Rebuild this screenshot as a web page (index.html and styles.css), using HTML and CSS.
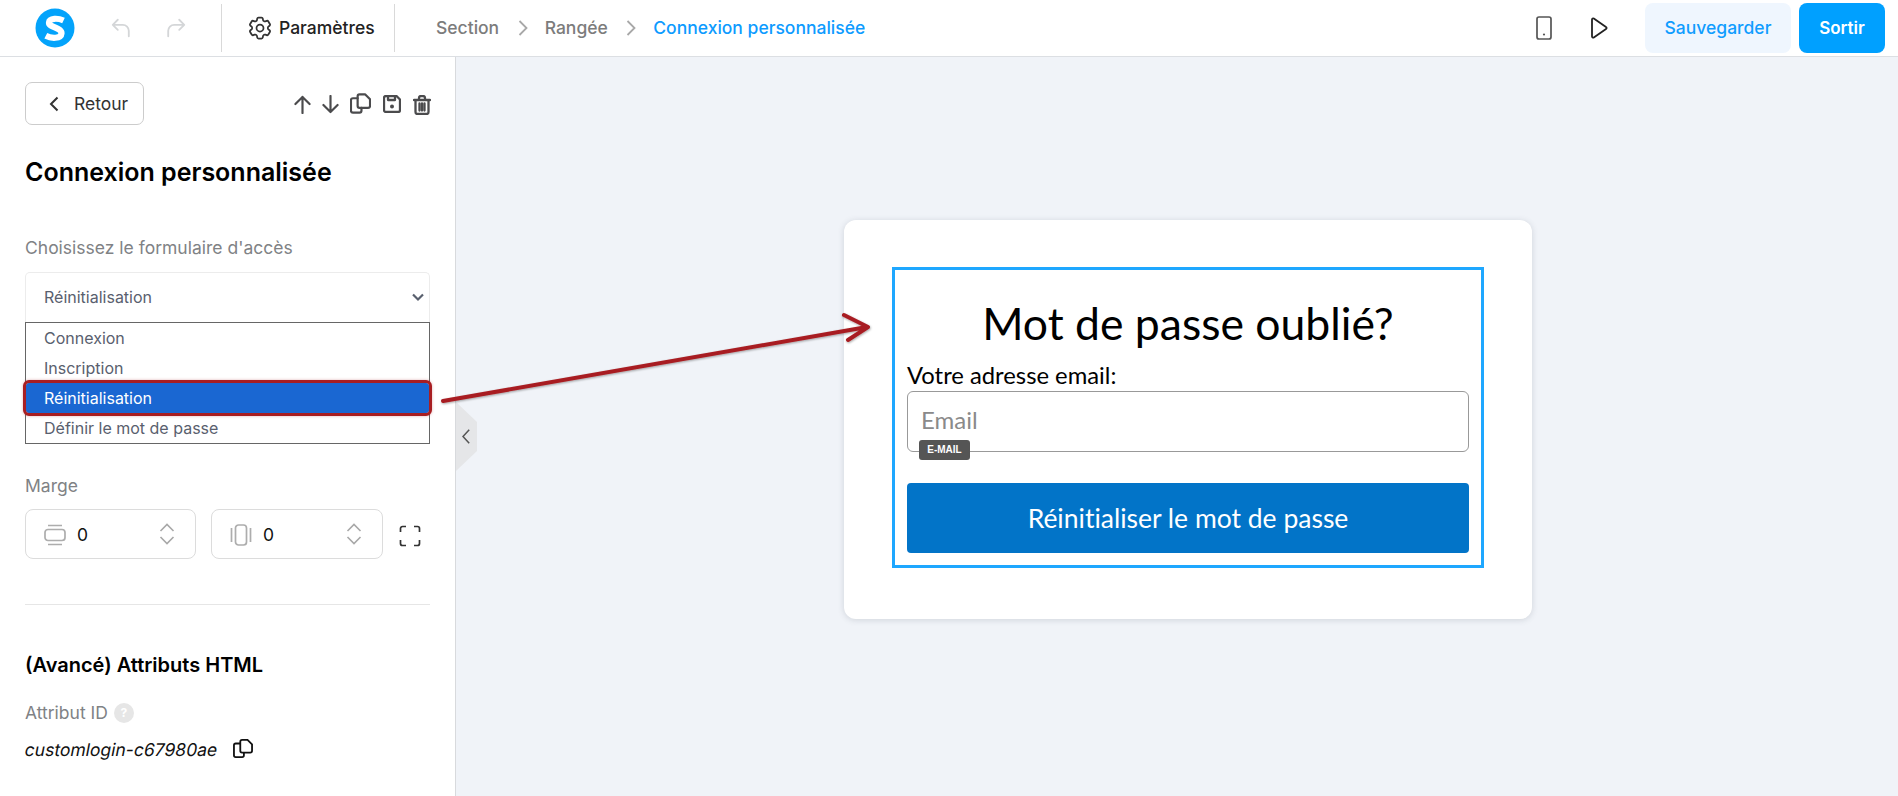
FILE: index.html
```html
<!DOCTYPE html>
<html lang="fr">
<head>
<meta charset="utf-8">
<title>Connexion personnalisée</title>
<link rel="stylesheet" href="styles.css">
</head>
<body>
<div class="app">
  <header class="topbar">
    <svg class="logo" viewBox="0 0 40 40"><circle cx="20" cy="20" r="19.5" fill="#03a3fb"/><path d="M28.5 12.5C23 10 14.5 9.800 14 14.500C13.500 19.500 27 19.500 26.500 25.500C26 31 16 30.500 10.800 27.800" fill="none" stroke="#fff" stroke-width="6.200"/></svg>
    <svg class="ico-hist first" viewBox="0 0 24 24"><path d="M8.500 3 3 8.500 8.500 14M3 8.500h11a6.500 6.500 0 0 1 6.500 6.500v6"/></svg>
    <svg class="ico-hist second" viewBox="0 0 24 24"><path d="M15.500 3 21 8.500 15.500 14M21 8.500H10A6.500 6.500 0 0 0 3.500 15v6"/></svg>
    <div class="settings">
      <svg class="gear" viewBox="0 0 24 24"><path d="M9.594 3.940c.09-.542.56-.94 1.110-.94h2.593c.55 0 1.020.398 1.110.94l.213 1.281c.063.374.313.686.645.870.074.04.147.083.22.127.325.196.72.257 1.075.124l1.217-.456a1.125 1.125 0 0 1 1.370.49l1.296 2.247a1.125 1.125 0 0 1-.26 1.431l-1.003.827c-.293.241-.438.613-.43.992a7.723 7.723 0 0 1 0 .255c-.008.378.137.75.43.991l1.004.827c.424.35.534.955.26 1.430l-1.298 2.247a1.125 1.125 0 0 1-1.369.491l-1.217-.456c-.355-.133-.75-.072-1.076.124a6.470 6.470 0 0 1-.22.128c-.331.183-.581.495-.644.869l-.213 1.281c-.09.543-.56.94-1.110.94h-2.594c-.55 0-1.019-.398-1.110-.94l-.213-1.281c-.062-.374-.312-.686-.644-.870a6.520 6.520 0 0 1-.22-.127c-.325-.196-.72-.257-1.076-.124l-1.217.456a1.125 1.125 0 0 1-1.369-.49l-1.297-2.247a1.125 1.125 0 0 1 .26-1.431l1.004-.827c.292-.24.437-.613.43-.991a6.932 6.932 0 0 1 0-.255c.007-.38-.138-.751-.43-.992l-1.004-.827a1.125 1.125 0 0 1-.26-1.430l1.297-2.247a1.125 1.125 0 0 1 1.370-.491l1.216.456c.356.133.751.072 1.076-.124.072-.044.146-.086.22-.128.332-.183.582-.495.644-.869l.214-1.280Z"/><circle cx="12" cy="12" r="3"/></svg>
      <span>Paramètres</span>
    </div>
    <nav class="crumbs">
      <span>Section</span>
      <svg class="crumb-sep" viewBox="0 0 10 16"><path d="M1.500 1 8.500 8 1.500 15"/></svg>
      <span>Rangée</span>
      <svg class="crumb-sep" viewBox="0 0 10 16"><path d="M1.500 1 8.500 8 1.500 15"/></svg>
      <span class="crumb-current">Connexion personnalisée</span>
    </nav>
    <div class="top-actions">
      <svg class="ico-phone" viewBox="0 0 16 24"><rect x="1" y="1" width="14" height="22" rx="2"/><circle class="dot" cx="8" cy="18.500" r="1.100"/></svg>
      <svg class="ico-play" viewBox="0 0 18 22"><path d="M2 2.500C2 1.500 3 1 3.800 1.500L16 10c.8.500.8 1.500 0 2L3.800 20.500C3 21 2 20.500 2 19.500Z"/></svg>
      <button class="btn-save">Sauvegarder</button>
      <button class="btn-exit">Sortir</button>
    </div>
  </header>

  <div class="workspace">
    <aside class="sidebar">
      <div class="toolbar">
        <button class="btn-back">
          <svg class="ico-back" viewBox="0 0 10 16"><path d="M8.500 1.500 2 8l6.500 6.500"/></svg>
          <span>Retour</span>
        </button>
        <div class="tools">
          <svg class="tool t-up" viewBox="0 0 18 20"><path d="M9 19V2M1.500 9.500 9 2l7.500 7.500"/></svg>
          <svg class="tool t-down" viewBox="0 0 18 20"><path d="M9 1v17M1.500 10.500 9 18l7.500-7.500"/></svg>
          <svg class="tool t-copy" viewBox="0 0 22 21"><path d="M8 5H3a2 2 0 0 0-2 2v11a2 2 0 0 0 2 2h7a2 2 0 0 0 2-2v-3"/><path d="M8 3a2 2 0 0 1 2-2h6l5 5v7a2 2 0 0 1-2 2h-9a2 2 0 0 1-2-2Z"/></svg>
          <svg class="tool t-save" viewBox="0 0 18 18"><path d="M1 3a2 2 0 0 1 2-2h10.500L17 4.500V15a2 2 0 0 1-2 2H3a2 2 0 0 1-2-2Z"/><path d="M5 1v4h7V1"/><circle class="dot" cx="9" cy="11.500" r="2"/></svg>
          <svg class="tool t-trash" viewBox="0 0 18 20"><path d="M1 5h16M6 5V3a2 2 0 0 1 2-2h2a2 2 0 0 1 2 2v2M2.500 5v12a2 2 0 0 0 2 2h9a2 2 0 0 0 2-2V5M6.500 8.500v7M9 8.500v7M11.500 8.500v7"/></svg>
        </div>
      </div>

      <h1 class="panel-title">Connexion personnalisée</h1>

      <label class="field-label form-label">Choisissez le formulaire d'accès</label>
      <div class="select">
        <span>Réinitialisation</span>
        <svg class="select-caret" viewBox="0 0 14 10"><path d="M2 2.500 7 7.500 12 2.500"/></svg>
      </div>
      <ul class="options">
        <li>Connexion</li>
        <li>Inscription</li>
        <li class="selected">Réinitialisation</li>
        <li>Définir le mot de passe</li>
      </ul>

      <label class="field-label margin-label">Marge</label>
      <div class="margin-row">
        <div class="num-field">
          <svg class="ico-side" viewBox="0 0 22 22"><path d="M4 1.500h14M4 20.500h14"/><rect x="1" y="5.500" width="20" height="11" rx="3"/></svg>
          <span class="num-value">0</span>
          <svg class="spinner" viewBox="0 0 16 22"><path d="M1.500 8 8 1.500 14.500 8M1.500 14 8 20.500 14.500 14"/></svg>
        </div>
        <div class="num-field wide">
          <svg class="ico-side" viewBox="0 0 22 22"><path d="M1.500 4v14M20.500 4v14"/><rect x="5.500" y="1" width="11" height="20" rx="3"/></svg>
          <span class="num-value">0</span>
          <svg class="spinner" viewBox="0 0 16 22"><path d="M1.500 8 8 1.500 14.500 8M1.500 14 8 20.500 14.500 14"/></svg>
        </div>
        <svg class="ico-expand" viewBox="0 0 22 22"><path d="M1.500 7V3.500a2 2 0 0 1 2-2H7M15 1.500h3.500a2 2 0 0 1 2 2V7M20.500 15v3.500a2 2 0 0 1-2 2H15M7 20.500H3.500a2 2 0 0 1-2-2V15"/></svg>
      </div>

      <hr class="divider">

      <h2 class="adv-title">(Avancé) Attributs HTML</h2>
      <div class="field-label id-label">Attribut ID <span class="help">?</span></div>
      <div class="id-row">
        <span class="id-value">customlogin-c67980ae</span>
        <svg class="ico-copy" viewBox="0 0 22 21"><path d="M8 5H3a2 2 0 0 0-2 2v11a2 2 0 0 0 2 2h7a2 2 0 0 0 2-2v-3"/><path d="M8 3a2 2 0 0 1 2-2h6l5 5v7a2 2 0 0 1-2 2h-9a2 2 0 0 1-2-2Z"/></svg>
      </div>
    </aside>

    <main class="canvas">
      <div class="card">
        <form class="login-box">
          <h3 class="login-title">Mot de passe oublié?</h3>
          <label class="login-label">Votre adresse email:</label>
          <div class="login-input">
            <span class="placeholder">Email</span>
            <span class="badge">E-MAIL</span>
          </div>
          <button type="button" class="login-submit">Réinitialiser le mot de passe</button>
        </form>
      </div>
    </main>
    <div class="collapse-tab">
      <svg viewBox="0 0 8 15"><path d="M7.200 .8 1 7.500l6.200 6.700"/></svg>
    </div>
  </div>

  <svg class="annotation" viewBox="0 0 1898 796">
    <defs><filter id="arrow-shadow" x="-5%" y="-20%" width="110%" height="140%"><feDropShadow dx="0.600" dy="1" stdDeviation="0.800" flood-color="#000" flood-opacity=".35"/></filter></defs>
    <path d="M443 401 867 327M844 315 868 327 848 340" filter="url(#arrow-shadow)"/>
  </svg>
</div>
</body>
</html>
```

FILE: styles.css
```css
* { box-sizing: border-box; }
html, body { margin: 0; height: 100%; }
body { font-family: Inter, "Liberation Sans", sans-serif; color: #222; background: #fff; overflow: hidden; }
svg { display: block; flex: none; fill: none; }
button { font-family: inherit; border: 0; cursor: pointer; }
.dot { fill: currentColor; stroke: none; }

.app { position: relative; width: 1898px; height: 796px; display: flex; flex-direction: column; }

/* Top bar */
.topbar { height: 57px; flex: none; display: flex; align-items: center; border-bottom: 1px solid #dcdfe3; padding-left: 35px; padding-bottom: 1px; }
.logo { width: 40px; height: 40px; }
.ico-hist { width: 22px; height: 22px; stroke: #d4d6d8; stroke-width: 2; stroke-linecap: round; stroke-linejoin: round; }
.ico-hist.first { margin-left: 35px; }
.ico-hist.second { margin-left: 33px; }
.settings { display: flex; align-items: center; margin-left: 34px; height: 48px; width: 174px; padding-left: 24px; border-left: 1px solid #d9d9d9; border-right: 1px solid #d9d9d9; font-size: 17.5px; font-weight: 500; color: #222; }
.gear { width: 28px; height: 28px; stroke: #333; stroke-width: 1.500; margin-right: 5px; }
.crumbs { display: flex; align-items: center; margin-left: 41px; font-size: 17.5px; font-weight: 500; color: #7c7c7c; }
.crumb-sep { width: 10px; height: 16px; margin: 0 17px 0 18.500px; stroke: #a8a8a8; stroke-width: 1.800; }
.crumb-current { color: #0d9bff; }
.top-actions { display: flex; align-items: center; margin-left: auto; padding-right: 13px; }
.ico-phone { width: 16px; height: 24px; stroke: #555; stroke-width: 1.700; color: #555; }
.ico-play { width: 18px; height: 22px; stroke: #222; stroke-width: 1.800; stroke-linejoin: round; margin-left: 38px; }
.btn-save { width: 146px; height: 50px; margin-left: 37px; border-radius: 8px; background: #eff6fe; color: #109dff; font-size: 17.5px; font-weight: 500; }
.btn-exit { width: 86px; height: 50px; margin-left: 8px; border-radius: 8px; background: #00a0ff; color: #fff; font-size: 17px; font-weight: 600; }

/* Workspace */
.workspace { flex: 1; min-height: 0; display: flex; position: relative; }
.sidebar { width: 456px; flex: none; padding: 25px 25px 0; border-right: 1px solid #d8dadd; background: #fff; }
.toolbar { display: flex; justify-content: space-between; align-items: center; height: 43px; }
.btn-back { display: flex; align-items: center; width: 119px; height: 43px; padding: 0 0 0 23px; background: #fff; border: 1px solid #ccc; border-radius: 7px; font-size: 17.5px; color: #333; }
.ico-back { width: 10px; height: 16px; stroke: #333; stroke-width: 2; margin-right: 15px; }
.tools { display: flex; align-items: center; margin: 2px -1px 0 0; }
.tool { stroke: #4b4b4d; stroke-width: 2.300; color: #4b4b4d; stroke-linecap: round; stroke-linejoin: round; }
.t-up { width: 17px; height: 19px; }
.t-down { width: 17px; height: 19px; margin-left: 11px; }
.t-copy { width: 21px; height: 21px; margin-left: 11px; margin-top: -2px; }
.t-save { width: 18px; height: 18px; margin-left: 12px; margin-top: -1px; }
.t-trash { width: 18px; height: 20px; margin-left: 12px; }

.panel-title { margin: 32px 0 0; font-size: 25px; line-height: 30px; font-weight: 600; color: #000; }
.field-label { display: block; font-size: 17.5px; line-height: 20px; color: #808285; }
.form-label { margin-top: 51px; }
.select { display: flex; align-items: center; justify-content: space-between; height: 50px; margin-top: 14px; padding: 0 4px 1px 18px; border: 1px solid #ececec; border-bottom: 0; border-radius: 5px 5px 0 0; font-size: 16px; color: #59606e; }
.select-caret { width: 14px; height: 10px; stroke: #59606e; stroke-width: 2.200; }
.options { list-style: none; margin: 0; padding: 0; border: 1px solid #666; font-size: 16px; color: #59606e; }
.options li { height: 30px; line-height: 31px; padding-left: 18px; }
.options .selected { background: #1a67d2; color: #fff; border-radius: 3px; outline: 3px solid #a81e22; outline-offset: 0; box-shadow: 0 0 3px 3px rgba(168, 30, 34, .35); position: relative; }

.margin-label { margin-top: 32px; }
.margin-row { display: flex; align-items: center; margin-top: 13px; }
.num-field { display: flex; align-items: center; width: 171px; height: 50px; padding: 0 20px 0 18px; border: 1px solid #dcdcdc; border-radius: 8px; }
.num-field.wide { width: 172px; margin-left: 15px; }
.ico-side { width: 22px; height: 22px; stroke: #adadad; stroke-width: 1.700; margin-top: 2px; }
.num-value { margin-left: 11px; font-size: 17.5px; color: #111; }
.spinner { width: 16px; height: 22px; margin-left: auto; stroke: #a8a8a8; stroke-width: 1.600; }
.ico-expand { width: 22px; height: 22px; margin: 4px 0 0 16px; stroke: #333; stroke-width: 1.700; }
.divider { margin: 45px 0 0; border: 0; border-top: 1px solid #e6e6e6; }
.adv-title { margin: 48px 0 0; font-size: 20px; line-height: 24px; font-weight: 600; color: #000; }
.id-label { display: flex; align-items: center; gap: 6px; margin-top: 26px; }
.help { width: 20px; height: 20px; border-radius: 50%; background: #e6e6e6; color: #fff; font-size: 12px; font-weight: 700; text-align: center; line-height: 20px; }
.id-row { display: flex; align-items: center; margin-top: 17px; font-size: 17.5px; line-height: 20px; color: #111; }
.id-value { display: inline-block; transform: skewX(-11deg); }
.ico-copy { width: 20px; height: 19px; margin-left: 16px; stroke: #111; stroke-width: 2; margin-top: -3px; }

/* Canvas */
.canvas { flex: 1; background: #f0f3f8; padding: 163px 0 0 388px; }
.card { width: 688px; height: 399px; background: #fff; border-radius: 12px; box-shadow: 0 1px 6px rgba(60, 70, 90, .18); padding: 47px 48px 0; }
.login-box { height: 301px; border: 3px solid #1ea7ff; padding: 0 12px; font-family: Lato, "Noto Sans", sans-serif; color: #000; font-variant-ligatures: none; }
.login-title { margin: 23px 0 0; font-size: 44.5px; line-height: 60px; font-weight: 400; text-align: center; }
.login-label { display: block; margin-top: 8px; font-size: 23.8px; line-height: 28px; }
.login-input { position: relative; height: 61px; margin-top: 2px; padding-left: 13px; border: 1px solid #999; border-radius: 6px; font-size: 24px; line-height: 56px; color: #8a8a8a; }
.badge { position: absolute; left: 11px; top: 48px; height: 20px; width: 51px; border-radius: 3px; background: #555; color: #fff; font-family: "Liberation Sans", sans-serif; font-size: 10px; font-weight: 700; line-height: 20px; text-align: center; }
.login-submit { display: block; width: 100%; height: 70px; margin-top: 31px; border-radius: 4px; background: #0274c8; color: #fff; font-family: inherit; font-size: 26.5px; font-variant-ligatures: none; }

/* Overlays */
.collapse-tab { position: absolute; left: 456px; top: 345px; width: 21px; height: 69px; display: flex; align-items: center; padding-left: 6px; background: #e5e6e8; clip-path: polygon(0 0, 100% 29%, 100% 71%, 0 100%); }
.collapse-tab svg { width: 8px; height: 15px; stroke: #555; stroke-width: 1.500; }
.annotation { position: absolute; left: 0; top: 0; width: 1898px; height: 796px; pointer-events: none; stroke: #a81e22; stroke-width: 4; stroke-linecap: round; stroke-linejoin: round; fill: none; }
```
